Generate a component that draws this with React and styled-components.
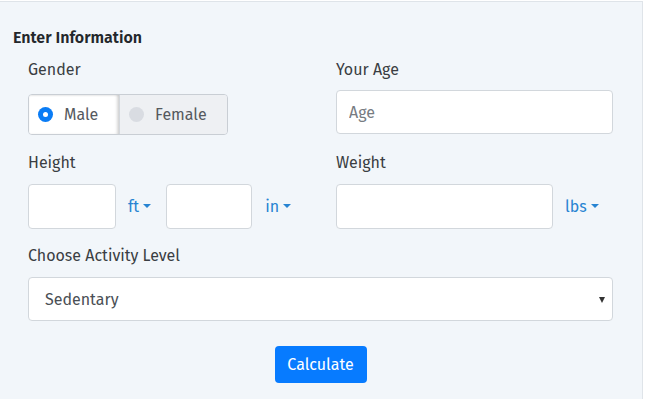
import React from "react";
import styled, { createGlobalStyle } from "styled-components";

const Global = createGlobalStyle`
  html, body { margin: 0; padding: 0; background: #ffffff; }
  body { font-family: "Fira Sans", Lato, "Noto Sans", sans-serif; color: #3b3f44; }
  * { box-sizing: border-box; }
`;

const Panel = styled.section`
  margin-top: 1px;
  width: 643px;
  height: 398px;
  background: #f2f6fa;
  border-top: 1px solid #dfe4e9;
  border-right: 1px solid #dfe4e9;
  padding: 25px 29px 0 13px;
`;

const Heading = styled.h2`
  margin: 0;
  font-size: 16px;
  line-height: 21px;
  font-weight: 600;
  color: #23272b;
`;

const Body = styled.div`
  padding-left: 15px;
  margin-top: 10px;
`;

const Grid = styled.div`
  display: grid;
  grid-template-columns: 284px 277px;
  column-gap: 24px;
`;

const Field = styled.div`
  display: flex;
  flex-direction: column;
  margin-bottom: ${(p) => p.$mb || 0}px;
`;

const Label = styled.label`
  font-size: 16px;
  line-height: 24px;
  color: #3a3e43;
  margin-bottom: ${(p) => p.$mb || 8}px;
`;

const Toggle = styled.div`
  display: flex;
  width: 200px;
  height: 41px;
  margin-top: 4px;
  border: 1px solid #c9ced4;
  border-radius: 4px;
  overflow: hidden;
`;

const Segment = styled.div`
  display: flex;
  align-items: center;
  gap: 11px;
  padding-left: 9px;
  width: ${(p) => p.$w}px;
  height: 100%;
  font-size: 16px;
  color: #55595e;
  background: ${(p) => (p.$active ? "#ffffff" : "#eef0f3")};
  box-shadow: ${(p) =>
    p.$active ? "inset -3px 0 3px -1px rgba(0,0,0,0.16), inset 0 1px 2px rgba(0,0,0,0.07)" : "none"};
  border-left: ${(p) => (p.$active ? "none" : "1px solid #d3d7dc")};
`;

const Radio = styled.span`
  width: 15px;
  height: 15px;
  border-radius: 50%;
  background: ${(p) => (p.$on ? "#0a7cf5" : "#d9dce2")};
  display: flex;
  align-items: center;
  justify-content: center;
  flex-shrink: 0;
  &::after {
    content: "";
    width: 5px;
    height: 5px;
    border-radius: 50%;
    background: ${(p) => (p.$on ? "#ffffff" : "transparent")};
  }
`;

const Input = styled.input`
  width: ${(p) => (p.$w ? `${p.$w}px` : "100%")};
  height: ${(p) => p.$h || 44}px;
  border: 1px solid #d2d7dc;
  border-radius: 4px;
  background: #ffffff;
  padding: 0 12px;
  font-family: inherit;
  font-size: 16px;
  color: #495057;
  outline: none;
  &::placeholder { color: #777c82; }
`;

const UnitRow = styled.div`
  display: flex;
  align-items: center;
`;

const Unit = styled.button`
  display: flex;
  align-items: center;
  gap: 4px;
  border: none;
  background: none;
  padding: 0;
  margin: 0 ${(p) => p.$mr || 0}px 0 ${(p) => p.$ml || 12}px;
  font-family: inherit;
  font-size: 16px;
  color: #2784d2;
  cursor: pointer;
  &::after {
    content: "";
    border-left: 4px solid transparent;
    border-right: 4px solid transparent;
    border-top: 4px solid #2784d2;
    margin-top: -2px;
  }
`;

const SelectWrap = styled.div`
  position: relative;
  width: 585px;
`;

const Select = styled.select`
  appearance: none;
  -webkit-appearance: none;
  width: 100%;
  height: 44px;
  border: 1px solid #d2d7dc;
  border-radius: 4px;
  background: #ffffff;
  padding: 0 16px;
  font-family: inherit;
  font-size: 16px;
  color: #4a4f55;
  outline: none;
`;

const Arrow = styled.span`
  position: absolute;
  right: 8px;
  top: 20px;
  border-left: 3.5px solid transparent;
  border-right: 3.5px solid transparent;
  border-top: 6px solid #333;
  pointer-events: none;
`;

const Actions = styled.div`
  display: flex;
  justify-content: center;
  width: 585px;
  margin-top: 25px;
`;

const Button = styled.button`
  width: 92px;
  height: 37px;
  border: none;
  border-radius: 4px;
  background: #077bff;
  color: #ffffff;
  font-family: inherit;
  font-size: 16px;
  cursor: pointer;
`;

export default function App() {
  return (
    <>
      <Global />
      <Panel>
        <Heading>Enter Information</Heading>
        <Body>
          <Grid>
            <Field $mb={16}>
              <Label>Gender</Label>
              <Toggle>
                <Segment $active $w={91}>
                  <Radio $on />
                  Male
                </Segment>
                <Segment $w={109}>
                  <Radio />
                  Female
                </Segment>
              </Toggle>
            </Field>
            <Field $mb={16}>
              <Label>Your Age</Label>
              <Input placeholder="Age" $w={277} />
            </Field>
            <Field $mb={15}>
              <Label $mb={9}>Height</Label>
              <UnitRow>
                <Input $w={88} $h={45} />
                <Unit $mr={15}>ft</Unit>
                <Input $w={86} $h={45} />
                <Unit $ml={13}>in</Unit>
              </UnitRow>
            </Field>
            <Field $mb={15}>
              <Label $mb={9}>Weight</Label>
              <UnitRow>
                <Input $w={217} $h={45} />
                <Unit $ml={12}>lbs</Unit>
              </UnitRow>
            </Field>
          </Grid>
          <Field>
            <Label $mb={9}>Choose Activity Level</Label>
            <SelectWrap>
              <Select defaultValue="sedentary">
                <option value="sedentary">Sedentary</option>
                <option value="light">Lightly active</option>
                <option value="moderate">Moderately active</option>
                <option value="very">Very active</option>
              </Select>
              <Arrow />
            </SelectWrap>
          </Field>
          <Actions>
            <Button>Calculate</Button>
          </Actions>
        </Body>
      </Panel>
    </>
  );
}
